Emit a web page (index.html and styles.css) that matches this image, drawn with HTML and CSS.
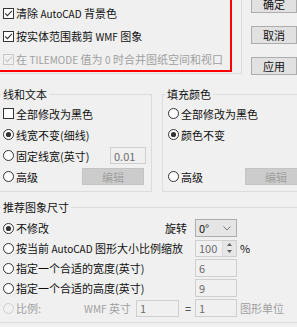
FILE: index.html
```html
<!DOCTYPE html>
<html lang="zh-CN">
<head>
<meta charset="utf-8">
<title>WMF 选项</title>
<link rel="stylesheet" href="styles.css">
</head>
<body>
<div class="top">
  <div class="frame">
    <div class="redbox">
      <div class="row h24">
        <svg class="ck" width="11" height="11" viewBox="0 0 11 11"><rect x="0.5" y="0.5" width="10" height="10" fill="#fff" stroke="#333"/><path d="M2.2 5.4 4.4 7.7 8.9 2.9" fill="none" stroke="#333" stroke-width="1.1"/></svg>
        <span>清除 <span class="en">AutoCAD</span> 背景色</span>
      </div>
      <div class="row h23">
        <svg class="ck" width="11" height="11" viewBox="0 0 11 11"><rect x="0.5" y="0.5" width="10" height="10" fill="#fff" stroke="#333"/><path d="M2.2 5.4 4.4 7.7 8.9 2.9" fill="none" stroke="#333" stroke-width="1.1"/></svg>
        <span>按实体范围裁剪 <span class="en">WMF</span> 图象</span>
      </div>
      <div class="row h22 dis">
        <svg class="ck" width="11" height="11" viewBox="0 0 11 11"><rect x="0.5" y="0.5" width="10" height="10" fill="none" stroke="#c8c8c8"/><path d="M2.2 5.4 4.4 7.7 8.9 2.9" fill="none" stroke="#c8c8c8" stroke-width="1.1"/></svg>
        <span>在 <span class="en">TILEMODE</span> 值为 <span class="en">0</span> 时合并图纸空间和视口</span>
      </div>
    </div>
  </div>
  <div class="buttons">
    <div class="btn">确定</div>
    <div class="btn">取消</div>
    <div class="btn">应用</div>
  </div>
</div>

<div class="groups">
  <fieldset class="grp g1">
    <legend>线和文本</legend>
    <div class="grow">
      <svg class="ck" width="11" height="11" viewBox="0 0 11 11"><rect x="0.5" y="0.5" width="10" height="10" fill="#fff" stroke="#333"/></svg>
      <span>全部修改为黑色</span>
    </div>
    <div class="grow">
      <svg class="rd" width="11" height="11" viewBox="0 0 11 11"><circle cx="5.5" cy="5.5" r="5" fill="#fff" stroke="#333"/><circle cx="5.5" cy="5.5" r="2.6" fill="#333"/></svg>
      <span>线宽不变(细线)</span>
    </div>
    <div class="grow">
      <svg class="rd" width="11" height="11" viewBox="0 0 11 11"><circle cx="5.5" cy="5.5" r="5" fill="#fff" stroke="#333"/></svg>
      <span>固定线宽(英寸)</span>
      <span class="tb w36 push">0.01</span>
    </div>
    <div class="grow">
      <svg class="rd" width="11" height="11" viewBox="0 0 11 11"><circle cx="5.5" cy="5.5" r="5" fill="#fff" stroke="#333"/></svg>
      <span>高级</span>
      <span class="ebtn push">编辑</span>
    </div>
  </fieldset>
  <fieldset class="grp g2">
    <legend>填充颜色</legend>
    <div class="grow">
      <svg class="rd" width="11" height="11" viewBox="0 0 11 11"><circle cx="5.5" cy="5.5" r="5" fill="#fff" stroke="#333"/></svg>
      <span>全部修改为黑色</span>
    </div>
    <div class="grow">
      <svg class="rd" width="11" height="11" viewBox="0 0 11 11"><circle cx="5.5" cy="5.5" r="5" fill="#fff" stroke="#333"/><circle cx="5.5" cy="5.5" r="2.6" fill="#333"/></svg>
      <span>颜色不变</span>
    </div>
    <div class="grow"></div>
    <div class="grow">
      <svg class="rd" width="11" height="11" viewBox="0 0 11 11"><circle cx="5.5" cy="5.5" r="5" fill="#fff" stroke="#333"/></svg>
      <span>高级</span>
      <span class="ebtn push">编辑</span>
    </div>
  </fieldset>
</div>

<fieldset class="grp g3">
  <legend>推荐图象尺寸</legend>
  <div class="brow">
    <div class="left">
      <svg class="rd" width="11" height="11" viewBox="0 0 11 11"><circle cx="5.5" cy="5.5" r="5" fill="#fff" stroke="#333"/><circle cx="5.5" cy="5.5" r="2.6" fill="#333"/></svg>
      <span>不修改</span>
      <span class="rot push">旋转</span>
    </div>
    <div class="sel"><span>0°</span><svg width="8" height="5" viewBox="0 0 8 5"><path d="M0.5 0.5 4 4 7.5 0.5" fill="none" stroke="#777"/></svg></div>
    <div></div>
  </div>
  <div class="brow">
    <div class="left">
      <svg class="rd" width="11" height="11" viewBox="0 0 11 11"><circle cx="5.5" cy="5.5" r="5" fill="#fff" stroke="#333"/></svg>
      <span>按当前 <span class="en">AutoCAD</span> 图形大小比例缩放</span>
    </div>
    <div class="spin">
      <span class="spin-val">100</span>
      <span class="spin-btns">
        <svg width="5" height="3" viewBox="0 0 5 3"><path d="M0 3 2.5 0 5 3z" fill="#606060"/></svg>
        <svg width="5" height="3" viewBox="0 0 5 3"><path d="M0 0 2.5 3 5 0z" fill="#606060"/></svg>
      </span>
    </div>
    <span class="after">%</span>
  </div>
  <div class="brow">
    <div class="left">
      <svg class="rd" width="11" height="11" viewBox="0 0 11 11"><circle cx="5.5" cy="5.5" r="5" fill="#fff" stroke="#333"/></svg>
      <span>指定一个合适的宽度(英寸)</span>
    </div>
    <span class="tb w42">6</span>
    <div></div>
  </div>
  <div class="brow">
    <div class="left">
      <svg class="rd" width="11" height="11" viewBox="0 0 11 11"><circle cx="5.5" cy="5.5" r="5" fill="#fff" stroke="#333"/></svg>
      <span>指定一个合适的高度(英寸)</span>
    </div>
    <span class="tb w42">9</span>
    <div></div>
  </div>
  <div class="brow">
    <div class="left dis">
      <svg class="rd" width="11" height="11" viewBox="0 0 11 11"><circle cx="5.5" cy="5.5" r="5" fill="none" stroke="#cfcfcf"/></svg>
      <span>比例:</span>
      <span class="wmf push"><span class="en">WMF</span> 英寸</span>
      <span class="tb w43">1</span>
      <span class="eq">=</span>
    </div>
    <span class="tb w42">1</span>
    <span class="after dis">图形单位</span>
  </div>
</fieldset>
</body>
</html>
```

FILE: styles.css
```css
html, body {
  margin: 0;
  padding: 0;
}
body {
  width: 297px;
  height: 327px;
  overflow: hidden;
  background: #f0f0f0;
  font-family: "Noto Sans CJK SC", "Noto Sans", sans-serif;
  font-size: 11px;
  line-height: 14px;
  color: #111;
}
.en {
  font-size: 10px;
}

.top {
  display: flex;
  height: 87px;
}
.frame {
  flex: none;
  width: 242px;
  height: 74px;
  box-sizing: border-box;
  border-right: 1px solid #dcdcdc;
  border-bottom: 1px solid #dcdcdc;
}
.redbox {
  box-sizing: border-box;
  width: 234px;
  height: 74px;
  margin: -2px 0 0 -2px;
  border: 2px solid #ff0000;
  padding: 1px 0 0 3px;
}
.row {
  display: flex;
  align-items: center;
  gap: 2px;
  white-space: nowrap;
}
.h24 { height: 24px; }
.h23 { height: 23px; }
.h22 { height: 22px; }
.dis { color: #a0a0a0; }

.ck, .rd {
  flex: none;
  display: block;
}

.buttons {
  flex: none;
  display: flex;
  flex-direction: column;
  gap: 13px;
  margin: -5px 0 0 9px;
}
.btn {
  width: 46px;
  height: 18px;
  box-sizing: border-box;
  background: #e1e1e1;
  border: 1px solid #adadad;
  display: flex;
  align-items: center;
  justify-content: center;
}

.groups {
  display: flex;
}
.grp {
  margin: 0;
  border: 1px solid #dcdcdc;
  box-sizing: border-box;
  min-width: 0;
}
.grp legend {
  padding: 0 2px;
  line-height: 14px;
  font-size: 11px;
}
.g1 {
  flex: none;
  margin-left: -6px;
  width: 158px;
  padding: 2px 5px 4px 8px;
}
.g1 legend { margin-left: -2px; }
.g2 {
  flex: none;
  margin-left: 10px;
  width: 156px;
  padding: 2px 8px 4px 5px;
}
.g2 legend { margin-left: -3px; }
.grow {
  height: 21px;
  display: flex;
  align-items: center;
  gap: 2px;
  white-space: nowrap;
}
.push { margin-left: auto; }

.tb {
  box-sizing: border-box;
  height: 18px;
  border: 1px solid #cfcfcf;
  background: #f0f0f0;
  color: #6d6d6d;
  padding-left: 3px;
  display: flex;
  align-items: center;
}
.w36 { width: 36px; height: 17px; }
.w42 { width: 42px; }
.w43 { width: 43px; height: 17px; }

.ebtn {
  box-sizing: border-box;
  width: 62px;
  height: 17px;
  background: #cccccc;
  border: 1px solid #c4c4c4;
  color: #a0a0a0;
  display: flex;
  align-items: center;
  justify-content: center;
  margin-right: 2px;
}

.g3 {
  margin: 8px 0 0 -6px;
  width: 320px;
  padding: 4px 0 4px 8px;
}
.g3 legend { margin-left: -2px; }
.brow {
  display: grid;
  grid-template-columns: 192px 42px auto;
  height: 20px;
  align-items: center;
  white-space: nowrap;
}
.left {
  display: flex;
  align-items: center;
  gap: 2px;
}
.rot { margin-right: 8px; }
.sel {
  box-sizing: border-box;
  height: 18px;
  background: #e5e5e5;
  border: 1px solid #adadad;
  display: flex;
  align-items: center;
  justify-content: space-between;
  padding: 0 5px 0 3px;
}
.sel svg { display: block; }
.spin {
  display: flex;
  height: 17px;
  box-sizing: border-box;
  border: 1px solid #cfcfcf;
  background: #f0f0f0;
}
.spin-val {
  flex: 1;
  color: #6d6d6d;
  padding-left: 3px;
  display: flex;
  align-items: center;
}
.spin-btns {
  width: 13px;
  display: flex;
  flex-direction: column;
  justify-content: space-around;
  align-items: center;
  border-left: 1px solid #dadada;
  background: #e6e6e6;
}
.spin-btns svg { display: block; }
.after { margin-left: 3px; }
.wmf { margin-right: 3px; }
.eq {
  width: 14px;
  text-align: center;
  color: #333;
}
```
